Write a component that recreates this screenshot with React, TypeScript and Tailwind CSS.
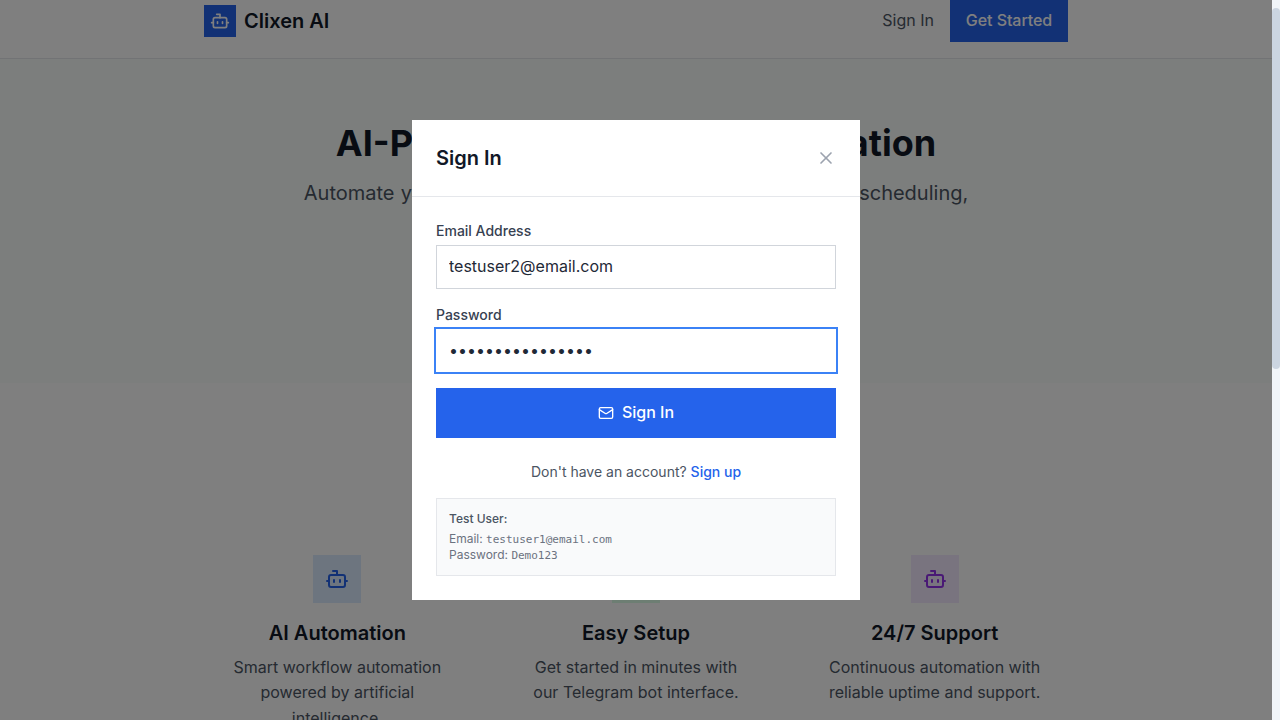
import { Bot, Mail, X } from "lucide-react";

const features = [
  {
    title: "AI Automation",
    text: "Smart workflow automation powered by artificial intelligence.",
    box: "bg-blue-100",
    icon: "text-[#2563eb]",
  },
  {
    title: "Easy Setup",
    text: "Get started in minutes with our Telegram bot interface.",
    box: "bg-green-100",
    icon: "text-[#16a34a]",
  },
  {
    title: "24/7 Support",
    text: "Continuous automation with reliable uptime and support.",
    box: "bg-purple-100",
    icon: "text-[#9333ea]",
  },
];

function Header() {
  return (
    <header className="h-[59px] shrink-0 border-b border-[#e5e7eb] bg-white">
      <div className="mx-auto flex h-[42px] w-[864px] items-center justify-between">
        <div className="flex items-center gap-2">
          <div className="flex size-8 items-center justify-center bg-[#2563eb]">
            <Bot className="size-5 text-white" />
          </div>
          <span className="text-xl font-semibold text-[#111827]">Clixen AI</span>
        </div>
        <div className="flex h-full items-center gap-4">
          <button className="text-[#4b5563]">Sign In</button>
          <button className="h-full w-[118px] bg-[#2563eb] font-medium tracking-[-0.06px] text-white">
            Get Started
          </button>
        </div>
      </div>
    </header>
  );
}

function Hero() {
  return (
    <section className="h-[324px] shrink-0 bg-[#f8fcfa] pt-16 text-center">
      <h1 className="text-4xl leading-10 font-bold whitespace-nowrap text-[#111827]">
        AI-Powered Workflow Automation
      </h1>
      <p className="mt-3.5 text-xl leading-8 whitespace-nowrap text-[#4b5563] [word-spacing:0.65px]">
        Automate your workflow with intelligent email processing, scheduling,
      </p>
    </section>
  );
}

function Features() {
  return (
    <section className="bg-white pt-[147.6px]">
      <div className="mx-auto grid w-[864px] grid-cols-3 gap-8">
        {features.map((f) => (
          <div key={f.title} className="p-6 text-center">
            <div className={`mx-auto mb-4 flex size-12 items-center justify-center ${f.box}`}>
              <Bot className={`size-6 ${f.icon}`} />
            </div>
            <h3 className="mb-2 text-xl leading-7 font-semibold text-[#111827]">{f.title}</h3>
            <p className="text-[#4b5563]">{f.text}</p>
          </div>
        ))}
      </div>
    </section>
  );
}

function SignInModal() {
  return (
    <div className="absolute inset-0 flex items-center justify-center bg-black/50">
      <div className="w-md bg-white">
        <div className="flex items-center justify-between border-b border-[#e5e7eb] p-6">
          <h2 className="text-xl leading-7 font-semibold text-[#111827]">Sign In</h2>
          <button className="text-[#9ca3af]">
            <X className="size-5" />
          </button>
        </div>
        <div className="p-6">
          <form className="flex flex-col gap-4">
            <div>
              <label className="mb-1 block text-sm leading-5 font-medium text-[#374151]">
                Email Address
              </label>
              <input
                type="email"
                readOnly
                value="testuser2@email.com"
                className="block h-[43.6px] w-full border border-[#d1d5db] px-3 pt-[7px] pb-[9px] text-[#1f2937] outline-none"
              />
            </div>
            <div>
              <label className="mb-1 block text-sm leading-5 font-medium text-[#374151]">
                Password
              </label>
              <input
                type="password"
                readOnly
                value="0123456789abcdef"
                className="block h-[43.6px] w-full border border-transparent px-3 pt-[7px] pb-[9px] text-[#1f2937] ring-2 ring-[#3b82f6] outline-none"
              />
            </div>
            <button
              type="button"
              className="flex w-full items-center justify-center gap-2 bg-[#2563eb] px-4 py-3 font-medium text-white"
            >
              <Mail className="size-4" />
              <span>Sign In</span>
            </button>
          </form>
          <div className="mt-6 text-center text-sm leading-5 text-[#4b5563]">
            Don't have an account?{" "}
            <button className="font-medium text-[#2563eb]">Sign up</button>
          </div>
          <div className="mt-4 border border-[#e5e7eb] bg-[#f9fafb] p-3 text-xs leading-4 text-[#6b7280]">
            <p className="mb-1 font-medium text-[#4b5563]">Test User:</p>
            <p>
              Email: <span className="font-['DejaVu_Sans_Mono',monospace] text-[11px] leading-none">testuser1@email.com</span>
            </p>
            <p>
              Password: <span className="font-['DejaVu_Sans_Mono',monospace] text-[11px] leading-none">Demo123</span>
            </p>
          </div>
        </div>
      </div>
    </div>
  );
}

export default function App() {
  return (
    <div className="flex h-[720px] w-[1280px] overflow-hidden bg-white font-['Inter',sans-serif] text-base leading-[1.6]">
      <div className="relative flex h-full flex-1 flex-col overflow-hidden">
        <Header />
        <Hero />
        <Features />
        <SignInModal />
      </div>
      <div className="w-2 shrink-0 bg-[#f1f5f9] pt-2">
        <div className="h-[361px] rounded-full bg-[#cbd5e1]" />
      </div>
    </div>
  );
}
